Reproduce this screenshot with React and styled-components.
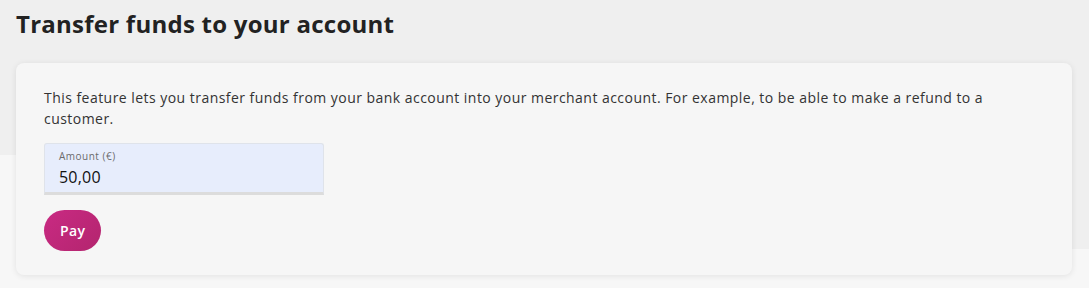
import React, { useState } from "react";
import styled, { createGlobalStyle } from "styled-components";

const GlobalStyle = createGlobalStyle`
  html, body {
    margin: 0;
    padding: 0;
  }
  body {
    font-family: "Open Sans", "Liberation Sans", sans-serif;
    color: #2b2b2b;
    background: #f7f7f7;
  }
`;

// Page with the grey header band behind the card
const Page = styled.div`
  min-height: 288px;
  box-sizing: border-box;
  padding: 7px 17px 14px 16px;
  background:
    linear-gradient(#efefef, #efefef) top left / 100% 155px no-repeat,
    linear-gradient(#efefef, #efefef) top right / 120px 249px no-repeat,
    #f7f7f7;
`;

const Title = styled.h1`
  margin: 0 0 22px;
  font-size: 24px;
  line-height: 34px;
  font-weight: 700;
  color: #222222;
  letter-spacing: 0.25px;
`;

const Card = styled.section`
  background: #f6f6f6;
  border-radius: 8px;
  box-shadow: 0 1px 6px rgba(0, 0, 0, 0.09);
  padding: 24px 28px 24px;
`;

const Text = styled.p`
  margin: 0 0 14px;
  font-size: 14px;
  line-height: 21px;
  color: #333333;
  letter-spacing: 0.46px;
`;

const Field = styled.label`
  display: flex;
  flex-direction: column;
  width: 280px;
  height: 52px;
  box-sizing: border-box;
  padding: 6px 14px 0;
  background: #e7edfc;
  border-radius: 3px 3px 0 0;
  border: 1px solid #dfe3ea;
  border-bottom: 3px solid #dcdcdc;
`;

const FieldLabel = styled.span`
  font-size: 10px;
  line-height: 13px;
  color: #6b6b6b;
  letter-spacing: 0.5px;
`;

const FieldInput = styled.input`
  border: none;
  outline: none;
  background: transparent;
  padding: 0;
  margin-top: 3px;
  font-family: inherit;
  font-size: 16px;
  line-height: 22px;
  color: #111111;
  letter-spacing: 0.2px;
`;

const PayButton = styled.button`
  margin-top: 15px;
  height: 41px;
  padding: 0 16px;
  border: none;
  border-radius: 21px;
  background: linear-gradient(135deg, #c92a83 0%, #b3256e 100%);
  color: #ffffff;
  font-family: inherit;
  font-size: 14px;
  font-weight: 600;
  letter-spacing: 0.4px;
  cursor: pointer;
`;

export default function App() {
  const [amount, setAmount] = useState("50,00");
  return (
    <>
      <GlobalStyle />
      <Page>
        <Title>Transfer funds to your account</Title>
        <Card>
          <Text>
            This feature lets you transfer funds from your bank account into
            your merchant account. For example, to be able to make a refund to
            a customer.
          </Text>
          <Field>
            <FieldLabel>Amount (€)</FieldLabel>
            <FieldInput
              value={amount}
              onChange={(e) => setAmount(e.target.value)}
            />
          </Field>
          <PayButton>Pay</PayButton>
        </Card>
      </Page>
    </>
  );
}
